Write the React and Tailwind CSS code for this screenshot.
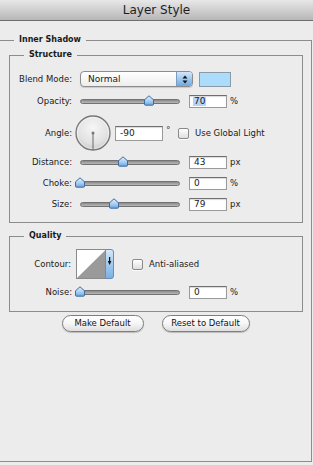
function Thumb({ pos }) {
  return (
    <svg className="absolute top-[1px]" style={{ left: pos - 6 }} width="12" height="11" viewBox="0 0 12 11">
      <defs>
        <linearGradient id="thumbg" x1="0" y1="0" x2="0" y2="1">
          <stop offset="0" stopColor="#e4f1fd" />
          <stop offset="0.55" stopColor="#a9cff2" />
          <stop offset="1" stopColor="#6aa6df" />
        </linearGradient>
      </defs>
      <path d="M1.5 4.8 L6 0.8 L10.5 4.8 V9.2 Q10.5 10.2 9.5 10.2 H2.5 Q1.5 10.2 1.5 9.2 Z" fill="url(#thumbg)" stroke="#3f6c9f" strokeWidth="1" />
    </svg>
  )
}

function Slider({ pos }) {
  return (
    <div className="relative w-[100px] h-[14px] flex items-center">
      <div className="w-full h-[5px] rounded-full border border-[#727272] bg-gradient-to-b from-[#8a8a8a] to-[#b9b9b9]" />
      <Thumb pos={pos} />
    </div>
  )
}

function Field({ value, width = 38, height = 13, selected }) {
  return (
    <div
      className="bg-white border border-[#9a9a9a] border-t-[#6e6e6e] shadow-[inset_0_1px_1px_rgba(0,0,0,0.15)] flex items-center pl-[3px] text-[9px] leading-none"
      style={{ width, height }}
    >
      {selected ? <span className="bg-[#b5d4fb] px-[1px]">{value}</span> : <span className="px-[1px]">{value}</span>}
    </div>
  )
}

function Label({ children, w = 62 }) {
  return (
    <div className="text-right shrink-0" style={{ width: w }}>{children}</div>
  )
}

function SliderRow({ label, pos, value, unit, mt, selected }) {
  return (
    <div className={`flex items-center h-[14px] ${mt}`}>
      <Label>{label}</Label>
      <div className="ml-[8px]"><Slider pos={pos} /></div>
      <div className="ml-[9px]"><Field value={value} selected={selected} /></div>
      <div className="ml-[3px]">{unit}</div>
    </div>
  )
}

function Checkbox() {
  return <div className="w-[11px] h-[11px] rounded-[2px] border border-[#8a8a8a] bg-gradient-to-b from-white to-[#dedede] shadow-[0_1px_0_rgba(255,255,255,0.8)]" />
}

function Dial() {
  return (
    <svg width="36" height="36" viewBox="0 0 36 36">
      <defs>
        <radialGradient id="dialg" cx="0.5" cy="0.35" r="0.65">
          <stop offset="0" stopColor="#f6f6f6" />
          <stop offset="0.7" stopColor="#e2e2e2" />
          <stop offset="1" stopColor="#c9c9c9" />
        </radialGradient>
      </defs>
      <circle cx="18" cy="18" r="17" fill="url(#dialg)" stroke="#777" strokeWidth="1.3" />
      <circle cx="18" cy="18" r="15.6" fill="none" stroke="#fff" strokeOpacity="0.6" strokeWidth="0.8" />
      <line x1="18" y1="18" x2="18" y2="34.5" stroke="#6a6a6a" strokeWidth="1" />
      <circle cx="18" cy="18" r="1.5" fill="#777" />
    </svg>
  )
}

function Contour() {
  return (
    <svg width="38" height="30" viewBox="0 0 38 30">
      <defs>
        <linearGradient id="contg" x1="0" y1="0" x2="0" y2="1">
          <stop offset="0" stopColor="#d5e8f9" />
          <stop offset="0.5" stopColor="#a3cbef" />
          <stop offset="1" stopColor="#78b0e3" />
        </linearGradient>
      </defs>
      <rect x="0.5" y="0.5" width="29" height="29" fill="#fff" stroke="#8a8a8a" />
      <path d="M1 29 L29 1.5 V29 Z" fill="#9a9a9a" />
      <path d="M29.5 0.5 H35 Q37.5 0.5 37.5 3 V27 Q37.5 29.5 35 29.5 H29.5 Z" fill="url(#contg)" stroke="#6a8db5" />
      <rect x="33" y="8" width="1.2" height="5" fill="#111" />
      <path d="M31.8 12 H35.4 L33.6 16 Z" fill="#111" />
    </svg>
  )
}

function Select() {
  return (
    <div className="w-[113px] h-[16px] rounded-[4px] border border-[#8c8c8c] bg-gradient-to-b from-white to-[#ededed] shadow-[0_1px_1px_rgba(0,0,0,0.15)] flex items-center overflow-hidden">
      <span className="pl-[7px] text-[9px]">Normal</span>
      <div className="ml-auto w-[16px] h-full border-l border-[#7b9cc2] bg-gradient-to-b from-[#d3e7fa] via-[#9ec8ef] to-[#6ea9e0] flex items-center justify-center">
        <svg width="6" height="9" viewBox="0 0 6 9">
          <path d="M3 0.5 L5.5 3.5 H0.5 Z" fill="#111" />
          <path d="M3 8.5 L5.5 5.5 H0.5 Z" fill="#111" />
        </svg>
      </div>
    </div>
  )
}

function PillButton({ children, w }) {
  return (
    <button className="h-[17px] rounded-full border border-[#7e7e7e] bg-gradient-to-b from-white via-[#f6f6f6] to-[#dedede] shadow-[0_1px_1px_rgba(0,0,0,0.2)] text-[8.5px] text-[#111] flex items-center justify-center" style={{ width: w }}>
      {children}
    </button>
  )
}

export default function App() {
  return (
    <div className="w-[313px] h-[465px] bg-[#ececec] overflow-hidden font-['DejaVu_Sans',sans-serif] text-[8.5px] leading-none text-[#1a1a1a]">
      <div className="h-[21px] border-b border-[#6f6f6f] bg-gradient-to-b from-[#e8e8e8] to-[#b7b7b7] flex items-center justify-center text-[12px] text-[#1e1e1e]">
        Layer Style
      </div>

      <fieldset className="ml-[-1px] w-[313px] h-[428px] mt-[13px] border border-[#8c8c8c]">
        <legend className="ml-[14px] px-[5px] font-bold text-[8px] leading-[12px]">Inner Shadow</legend>

        <fieldset className="ml-[9px] w-[294px] mt-[3px] pb-[11px] border border-[#8c8c8c]">
          <legend className="ml-[14px] px-[5px] font-bold text-[8px] leading-[12px]">Structure</legend>

          <div className="flex items-center h-[16px] mt-[10px]">
            <Label>Blend Mode:</Label>
            <div className="ml-[8px]"><Select /></div>
            <div className="ml-[6px] w-[32px] h-[15px] bg-[#abdcfb] border border-[#8a9aa8]" />
          </div>

          <SliderRow label="Opacity:" pos={69} value="70" unit="%" mt="mt-[7px]" selected />

          <div className="flex items-center h-[36px] mt-[7px]">
            <Label>Angle:</Label>
            <div className="ml-[3px]"><Dial /></div>
            <div className="ml-[4px]"><Field value="-90" width={48} height={15} /></div>
            <div className="w-[15px] self-start pt-[11px] pl-[3px] text-[9px] text-[#333]">°</div>
            <Checkbox />
            <div className="ml-[6px]">Use Global Light</div>
          </div>

          <SliderRow label="Distance:" pos={43} value="43" unit="px" mt="mt-[4px]" />
          <SliderRow label="Choke:" pos={0} value="0" unit="%" mt="mt-[7px]" />
          <SliderRow label="Size:" pos={34} value="79" unit="px" mt="mt-[7px]" />
        </fieldset>

        <fieldset className="ml-[9px] w-[294px] mt-[7px] pb-[12px] border border-[#8c8c8c]">
          <legend className="ml-[14px] px-[5px] font-bold text-[8px] leading-[12px]">Quality</legend>

          <div className="flex items-center h-[30px] mt-[7px]">
            <Label w={61}>Contour:</Label>
            <div className="ml-[5px]"><Contour /></div>
            <div className="ml-[18px]"><Checkbox /></div>
            <div className="ml-[6px]">Anti-aliased</div>
          </div>

          <SliderRow label="Noise:" pos={0} value="0" unit="%" mt="mt-[6px]" />
        </fieldset>

        <div className="flex justify-center gap-[18px] mt-[3px]">
          <PillButton w={82}>Make Default</PillButton>
          <PillButton w={88}>Reset to Default</PillButton>
        </div>
      </fieldset>
    </div>
  )
}
